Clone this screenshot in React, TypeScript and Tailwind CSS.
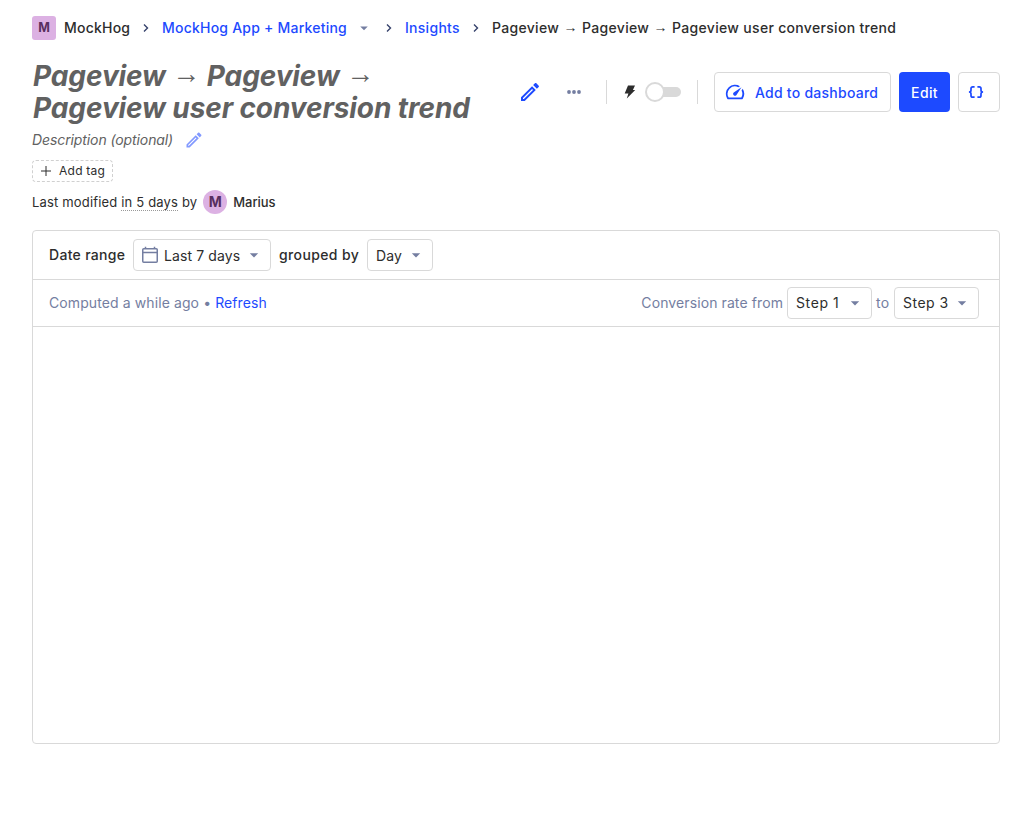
import type { ReactNode } from 'react'
import { MdSpeed, MdArrowDropDown } from 'react-icons/md'

function PencilIcon({ className }: { className: string }) {
  return (
    <svg viewBox="0 0 24 24" fill="currentColor" className={className}>
      <path d="M14.06,9L15,9.94L5.92,19H5V18.08L14.06,9M17.66,3C17.41,3 17.15,3.1 16.96,3.29L15.13,5.12L18.88,8.87L20.71,7.04C21.1,6.65 21.1,6 20.71,5.63L18.37,3.29C18.17,3.09 17.92,3 17.66,3M14.06,6.19L3,17.25V21H6.75L17.81,9.94L14.06,6.19Z" />
    </svg>
  )
}

function Chevron() {
  return (
    <svg viewBox="0 0 8 10" fill="none" stroke="#35416b" strokeWidth="1.4" className="h-[10px] w-2 shrink-0">
      <path d="M2 1.5 5.5 5 2 8.5" />
    </svg>
  )
}

function CalendarIcon() {
  return (
    <svg viewBox="0 0 16 18" fill="none" stroke="#747ea1" strokeWidth="1.5" className="h-[18px] w-4 shrink-0">
      <rect x="0.75" y="2.75" width="14.5" height="13.5" rx="1" />
      <path d="M1 6.4h14M3.5 0.8v2M12.5 0.8v2" />
    </svg>
  )
}

function Arrow({ className }: { className: string }) {
  return <span className={`inline-block font-['Liberation_Sans',sans-serif] leading-none font-normal not-italic ${className}`}>→</span>
}

function Select({ className, children }: { className: string; children: ReactNode }) {
  return (
    <button className={`flex h-8 shrink-0 items-center rounded border border-[#d9d9d9] bg-white pl-2 pr-[6px] text-[#2d2d2d] ${className}`}>
      {children}
      <MdArrowDropDown className="ml-auto size-5 text-[#747ea1]" />
    </button>
  )
}

export default function App() {
  return (
    <main className="h-[824px] w-[1032px] bg-white px-8 pt-4 font-['Inter',sans-serif] text-[14px] leading-6 tracking-[0.1px] text-[#2d2d2d]">
      <nav className="flex h-6 items-center font-medium whitespace-nowrap">
        <span className="flex size-6 items-center justify-center rounded-[3px] bg-[#dcb1e3] text-[12.5px] font-bold text-[#572e5e]">M</span>
        <span className="ml-2 w-[66px] tracking-[0.22px]">MockHog</span>
        <span className="ml-3 flex"><Chevron /></span>
        <a className="ml-3 w-[185px] tracking-[0.22px] text-[#1d4aff]">MockHog App + Marketing</a>
        <MdArrowDropDown className="ml-2 size-[18px] text-[#747ea1]" />
        <span className="ml-3 flex"><Chevron /></span>
        <a className="ml-3 w-[55px] tracking-[0.28px] text-[#1d4aff]">Insights</a>
        <span className="ml-3 flex"><Chevron /></span>
        <span className="ml-3 tracking-[0.31px]">Pageview <Arrow className="mx-[0.25px] -translate-y-px" /> Pageview <Arrow className="mx-[0.25px] -translate-y-px" /> Pageview user conversion trend</span>
      </nav>

      <header className="mt-5 flex h-16 items-center">
        <h1 className="w-[470px] pl-px text-[28px] leading-8 font-bold tracking-[-0.1px] text-[#616161] italic">
          Pageview <Arrow className="-translate-y-[3px]" /> Pageview <Arrow className="-translate-y-[3px]" /><br />Pageview user conversion trend
        </h1>
        <PencilIcon className="ml-4 size-6 shrink-0 text-[#1d4aff]" />
        <svg viewBox="0 0 14 4" fill="#747ea1" className="ml-[25px] h-1 w-[14px] shrink-0">
          <circle cx="2" cy="2" r="1.9" /><circle cx="7" cy="2" r="1.9" /><circle cx="12" cy="2" r="1.9" />
        </svg>
        <div className="ml-[25px] h-6 w-px shrink-0 bg-[#d9d9d9]" />
        <svg viewBox="0 0 12 14" fill="#2d2d2d" className="ml-[17px] h-[14px] w-3 shrink-0">
          <path d="M4 .5h7L8.9 5h2.3L2.8 13.5 4.4 8.5H.7z" />
        </svg>
        <div className="ml-[9px] flex h-5 w-9 shrink-0 items-center">
          <div className="size-5 shrink-0 rounded-full border-2 border-[#d9d9d9] bg-white" />
          <div className="-ml-0.5 h-[10px] w-[18px] rounded-r-full bg-[#d9d9d9]" />
        </div>
        <div className="ml-4 h-6 w-px shrink-0 bg-[#d9d9d9]" />
        <button className="ml-4 flex h-10 w-[177px] shrink-0 items-center rounded border border-[#d9d9d9] pl-[9px] font-medium text-[#1d4aff]">
          <MdSpeed className="size-[22px]" />
          <span className="ml-[9px] pt-0.5 tracking-[0.25px] whitespace-nowrap">Add to dashboard</span>
        </button>
        <button className="ml-2 h-10 w-[51px] shrink-0 rounded bg-[#1d4aff] pt-0.5 font-medium tracking-[0.35px] text-white">Edit</button>
        <button className="ml-2 flex h-10 w-[42px] shrink-0 items-center rounded border border-[#d9d9d9] pl-[9px] text-[#1d4aff]">
          <svg viewBox="0 0 16 12" fill="none" stroke="currentColor" strokeWidth="1.7" className="h-3 w-4 shrink-0">
            <path d="M6.6 .85H4.8Q3 .85 3 2.6V4.2Q3 6 .9 6Q3 6 3 7.8V9.4Q3 11.15 4.8 11.15H6.6M9.4 .85h1.8Q13 .85 13 2.6V4.2Q13 6 15.1 6Q13 6 13 7.8V9.4Q13 11.15 11.2 11.15H9.4" />
          </svg>
        </button>
      </header>

      <div className="mt-1 flex h-6 items-center text-[#616161] italic">
        <span className="w-[141px] tracking-[-0.1px] whitespace-nowrap">Description (optional)</span>
        <PencilIcon className="ml-[11px] size-5 text-[#8299ff]" />
      </div>
      <button className="mt-2 flex h-[22px] w-[81px] items-center rounded border border-dashed border-[#d0d0d0] pl-2 text-[12px] tracking-[0.25px]">
        <svg viewBox="0 0 10 10" stroke="#2d2d2d" className="size-[10px]"><path d="M5 0v10M0 5h10" /></svg>
        <span className="ml-2 whitespace-nowrap">Add tag</span>
      </button>
      <div className="mt-2 flex h-6 items-center text-[13px] tracking-[0.17px] whitespace-nowrap">
        <span>Last modified&nbsp;</span>
        <span className="border-b border-dotted border-[#999] leading-4">in 5 days</span>
        <span>&nbsp;by</span>
        <span className="ml-[6px] flex size-6 items-center justify-center rounded-full bg-[#dcb1e3] text-[14px] font-bold text-[#572e5e]">M</span>
        <span className="ml-[6px] font-medium tracking-[-0.05px]">Marius</span>
      </div>

      <section className="mt-4 h-[514px] rounded border border-[#d9d9d9]">
        <div className="flex h-[49px] items-center border-b border-[#d9d9d9] px-4 whitespace-nowrap">
          <span className="w-[76px] font-medium tracking-[0.3px]">Date range</span>
          <Select className="ml-2 w-[138px]"><CalendarIcon /><span className="ml-[6px] pt-0.5">Last 7 days</span></Select>
          <span className="ml-2 w-20 font-medium tracking-[0.38px]">grouped by</span>
          <Select className="ml-2 w-[66px]"><span className="pt-0.5">Day</span></Select>
        </div>
        <div className="flex h-[47px] items-center border-b border-[#d9d9d9] pr-5 pl-4 whitespace-nowrap text-[#747ea1]">
          <span>Computed a while ago • <a className="text-[#1d4aff]">Refresh</a></span>
          <span className="ml-auto">Conversion rate from</span>
          <Select className="ml-1 w-[85px]"><span className="tracking-[0.6px]">Step 1</span></Select>
          <span className="mx-1 w-[14px] tracking-[0.3px]">to</span>
          <Select className="w-[85px]"><span className="tracking-[0.5px]">Step 3</span></Select>
        </div>
      </section>
    </main>
  )
}
